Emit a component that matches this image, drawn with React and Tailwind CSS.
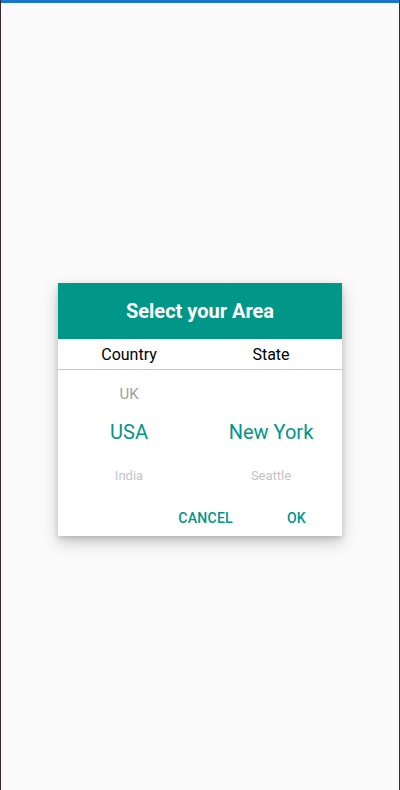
import React from "react";

export default function App() {
  return (
    <div
      className="h-[790px] w-full bg-[#fafafa] border-x border-[#3a2a2e] flex flex-col"
      style={{ fontFamily: "Roboto, 'Liberation Sans', sans-serif" }}
    >
      <div className="h-[3px] bg-[#1976d2] shrink-0" />
      <div className="pt-[280px] pl-[57px]">
        <div className="w-[284px] bg-white shadow-[0_6px_14px_rgba(0,0,0,0.22),0_2px_5px_rgba(0,0,0,0.12)] flex flex-col">
          <div className="h-[56px] bg-[#009688] flex items-center justify-center">
            <span className="text-white text-[20px] font-bold">Select your Area</span>
          </div>
          <div className="h-[30px] pt-[2px] grid grid-cols-2 items-center text-center text-[16px] text-black">
            <span>Country</span>
            <span>State</span>
          </div>
          <div className="h-px bg-[#c8c8c8]" />
          <div className="grid grid-cols-2 text-center">
            <div className="flex flex-col">
              <div className="h-[46px] pt-[2px] flex items-center justify-center text-[15px] text-[#9e9e9e]">UK</div>
              <div className="h-[32px] flex items-center justify-center text-[20px] text-[#009688]">USA</div>
              <div className="h-[52px] pt-[4px] flex items-center justify-center text-[13px] text-[#c4c4c4]">India</div>
            </div>
            <div className="flex flex-col">
              <div className="h-[46px]" />
              <div className="h-[32px] flex items-center justify-center text-[20px] text-[#009688]">New York</div>
              <div className="h-[52px] pt-[4px] flex items-center justify-center text-[13px] text-[#c4c4c4]">Seattle</div>
            </div>
          </div>
          <div className="h-[36px] flex items-center justify-end gap-[54px] pr-[36px] text-[14px] font-medium text-[#009688] tracking-[0.02em]">
            <span>CANCEL</span>
            <span>OK</span>
          </div>
        </div>
      </div>
    </div>
  );
}
